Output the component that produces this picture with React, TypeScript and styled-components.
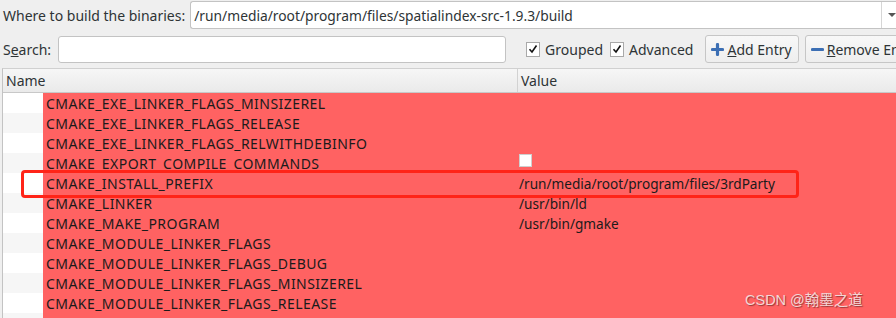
import React from "react";
import styled, {createGlobalStyle} from "styled-components";

const GlobalStyle = createGlobalStyle`
  html, body {
    margin: 0;
    padding: 0;
    background: #efefef;
    overflow: hidden;
  }
  body {
    font-family: "Noto Sans", "Open Sans", sans-serif;
    font-size: 14px;
    color: #2e3436;
  }
`;

const Window = styled.div`
  position: relative;
  width: 896px;
  height: 318px;
  overflow: hidden;
  background: #efefef;
`;

const TopRow = styled.div`
  display: flex;
  align-items: center;
  height: 30px;
  padding-left: 3px;
`;

const Label = styled.span`
  font-size: 14px;
  white-space: nowrap;
  color: #2e3436;
  flex-shrink: 0;
`;

const Combo = styled.div`
  display: flex;
  align-items: center;
  margin-left: 5px;
  height: 26px;
  flex: 1;
  background: #fff;
  border: 1px solid #c3c3c3;
  border-right: none;
  border-radius: 3px 0 0 3px;
  padding-left: 3px;
  white-space: nowrap;
`;

const ComboText = styled.span`
  flex: 1;
  font-size: 13.8px;
`;

const ComboArrow = styled.div`
  width: 14px;
  height: 26px;
  border-left: 1px solid #d6d6d6;
  display: flex;
  align-items: center;
  justify-content: center;
  &::after {
    content: "";
    border-left: 4px solid transparent;
    border-right: 4px solid transparent;
    border-top: 4px solid #555;
    margin-left: 6px;
  }
`;

const SearchRow = styled.div`
  display: flex;
  align-items: center;
  height: 28px;
  margin-top: 5px;
  padding-left: 3px;
  white-space: nowrap;
`;

const SearchInput = styled.div`
  flex-shrink: 0;
  margin-left: 7px;
  width: 446px;
  height: 25px;
  background: #fff;
  border: 1px solid #c3c3c3;
  border-radius: 3px;
`;

const Check = styled.label<{gap: number}>`
  flex-shrink: 0;
  display: flex;
  align-items: center;
  gap: 5px;
  margin-left: ${(p) => p.gap}px;
`;

const Box = styled.span`
  width: 12px;
  height: 13px;
  background: #fff;
  border: 1px solid #a9a9a9;
  display: flex;
  align-items: center;
  justify-content: center;
`;

const Button = styled.div<{gap: number}>`
  flex-shrink: 0;
  display: flex;
  align-items: center;
  gap: 3px;
  height: 26px;
  margin-left: ${(p) => p.gap}px;
  padding: 0 6px 0 5px;
  border: 1px solid #c6c6c6;
  border-radius: 3px;
  background: linear-gradient(#f8f8f8, #eeeeee);
`;

const Table = styled.div`
  margin: 5px 0 0 2px;
  border-left: 1px solid #c3c3c3;
  border-top: 1px solid #d0d0d0;
  background: #fff;
`;

const Header = styled.div`
  display: grid;
  grid-template-columns: 514px 1fr;
  height: 23px;
  background: linear-gradient(#f6f6f6, #eaeaea);
  border-bottom: 1px solid #c8c8c8;
`;

const HeaderCell = styled.div`
  display: flex;
  align-items: center;
  padding-left: 3px;
  & + & {
    border-left: 1px solid #d2d2d2;
  }
`;

const Row = styled.div<{odd: boolean}>`
  display: grid;
  grid-template-columns: 40px 473px 1fr;
  height: 20px;
  background: ${(p) => (p.odd ? "#f6f6f6" : "#ffffff")};
`;

const Cell = styled.div<{wide?: boolean}>`
  display: flex;
  align-items: center;
  background: #ff6262;
  color: #1b1b1b;
  white-space: nowrap;
  padding-left: 3px;
  font-size: ${(p) => (p.wide ? "14px" : "13.6px")};
  letter-spacing: ${(p) => (p.wide ? "0.45px" : "0")};
`;

const Indent = styled.div``;

const SmallBox = styled.span`
  width: 11px;
  height: 11px;
  background: #fff;
  border: 1px solid #cfcfcf;
  margin-top: -6px;
`;

const Highlight = styled.div`
  position: absolute;
  left: 21px;
  top: 170px;
  width: 772px;
  height: 22px;
  border: 3px solid #ff2418;
  border-radius: 4px;
`;

const Watermark = styled.div`
  position: absolute;
  left: 745px;
  top: 288px;
  font-family: "Liberation Sans", "Noto Sans CJK SC", sans-serif;
  font-size: 14.5px;
  color: #f4d6d6;
  text-shadow: 1px 1px 1px rgba(80, 30, 30, 0.6);
  white-space: nowrap;
`;

const Mnemonic = styled.span`
  text-decoration: underline;
`;

const rows: {name: string; value?: string; check?: boolean}[] = [
  {name: "CMAKE_EXE_LINKER_FLAGS_MINSIZEREL"},
  {name: "CMAKE_EXE_LINKER_FLAGS_RELEASE"},
  {name: "CMAKE_EXE_LINKER_FLAGS_RELWITHDEBINFO"},
  {name: "CMAKE_EXPORT_COMPILE_COMMANDS", check: true},
  {name: "CMAKE_INSTALL_PREFIX", value: "/run/media/root/program/files/3rdParty"},
  {name: "CMAKE_LINKER", value: "/usr/bin/ld"},
  {name: "CMAKE_MAKE_PROGRAM", value: "/usr/bin/gmake"},
  {name: "CMAKE_MODULE_LINKER_FLAGS"},
  {name: "CMAKE_MODULE_LINKER_FLAGS_DEBUG"},
  {name: "CMAKE_MODULE_LINKER_FLAGS_MINSIZEREL"},
  {name: "CMAKE_MODULE_LINKER_FLAGS_RELEASE"},
  {name: "CMAKE_MODULE_LINKER_FLAGS_RELWITHDEBINFO"},
];

const Tick = () => (
  <svg width="10" height="10" viewBox="0 0 10 10">
    <path d="M1.5 5.2 L4 8 L8.5 1.5" fill="none" stroke="#111" strokeWidth="1.6" />
  </svg>
);

const Plus = () => (
  <svg width="13" height="13" viewBox="0 0 13 13">
    <path d="M6.5 1.5 V11.5 M1.5 6.5 H11.5" stroke="#3c6fb4" strokeWidth="3.2" strokeLinecap="round" />
  </svg>
);

const Minus = () => (
  <svg width="13" height="13" viewBox="0 0 13 13">
    <path d="M1.5 6.5 H11.5" stroke="#3c6fb4" strokeWidth="3.2" strokeLinecap="round" />
  </svg>
);

export default function App() {
  return (
    <Window>
      <GlobalStyle />
      <TopRow>
        <Label>Where to build the binaries:</Label>
        <Combo>
          <ComboText>/run/media/root/program/files/spatialindex-src-1.9.3/build</ComboText>
          <ComboArrow />
        </Combo>
      </TopRow>
      <SearchRow>
        <Label>S<Mnemonic>e</Mnemonic>arch:</Label>
        <SearchInput />
        <Check gap={20}>
          <Box><Tick /></Box>
          <Label>Grouped</Label>
        </Check>
        <Check gap={7}>
          <Box><Tick /></Box>
          <Label>Advanced</Label>
        </Check>
        <Button gap={12}>
          <Plus />
          <Label><Mnemonic>A</Mnemonic>dd Entry</Label>
        </Button>
        <Button gap={6}>
          <Minus />
          <Label><Mnemonic>R</Mnemonic>emove Entry</Label>
        </Button>
      </SearchRow>
      <Table>
        <Header>
          <HeaderCell>Name</HeaderCell>
          <HeaderCell>Value</HeaderCell>
        </Header>
        {rows.map((r, i) => (
          <Row key={r.name} odd={i % 2 === 1}>
            <Indent />
            <Cell wide>{r.name}</Cell>
            <Cell>{r.check ? <SmallBox /> : r.value}</Cell>
          </Row>
        ))}
      </Table>
      <Highlight />
      <Watermark>CSDN @翰墨之道</Watermark>
    </Window>
  );
}
